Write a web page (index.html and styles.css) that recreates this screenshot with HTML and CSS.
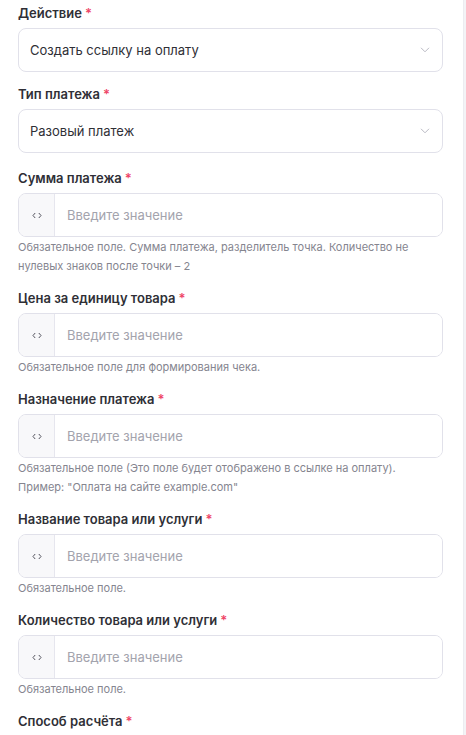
FILE: index.html
```html
<!DOCTYPE html>
<html lang="ru">
<head>
  <meta charset="UTF-8" />
  <meta name="viewport" content="width=device-width, initial-scale=1" />
  <title>Создать ссылку на оплату</title>
  <link rel="stylesheet" href="styles.css">
</head>
<body>

  <div class="panel">
    <form class="form">

      <!-- выбор действия -->
      <div class="field field-select">
        <label class="label">Действие<span class="req">*</span></label>
        <div class="select">
          <span class="select-value">Создать ссылку на оплату</span>
          <svg class="chevron" width="10" height="6" viewBox="0 0 10 6"><path d="M1 0.8l4 4 4-4" fill="none" stroke="#b9b9c3" stroke-width="1"/></svg>
        </div>
      </div>

      <div class="field field-select">
        <label class="label">Тип платежа<span class="req">*</span></label>
        <div class="select">
          <span class="select-value">Разовый платеж</span>
          <svg class="chevron" width="10" height="6" viewBox="0 0 10 6"><path d="M1 0.8l4 4 4-4" fill="none" stroke="#b9b9c3" stroke-width="1"/></svg>
        </div>
      </div>

      <!-- поля с переменными -->
      <div class="field">
        <label class="label">Сумма платежа<span class="req">*</span></label>
        <div class="input-group">
          <span class="prefix"><svg width="10" height="7" viewBox="0 0 10 7"><path d="M3.2 1L1 3.5 3.2 6M6.8 1L9 3.5 6.8 6" fill="none" stroke="#55555f" stroke-width="1"/></svg></span>
          <input type="text" placeholder="Введите значение" />
        </div>
        <p class="help">Обязательное поле. Сумма платежа, разделитель точка. Количество не нулевых знаков после точки – 2</p>
      </div>

      <div class="field">
        <label class="label">Цена за единицу товара<span class="req">*</span></label>
        <div class="input-group">
          <span class="prefix"><svg width="10" height="7" viewBox="0 0 10 7"><path d="M3.2 1L1 3.5 3.2 6M6.8 1L9 3.5 6.8 6" fill="none" stroke="#55555f" stroke-width="1"/></svg></span>
          <input type="text" placeholder="Введите значение" />
        </div>
        <p class="help">Обязательное поле для формирования чека.</p>
      </div>

      <div class="field">
        <label class="label">Назначение платежа<span class="req">*</span></label>
        <div class="input-group">
          <span class="prefix"><svg width="10" height="7" viewBox="0 0 10 7"><path d="M3.2 1L1 3.5 3.2 6M6.8 1L9 3.5 6.8 6" fill="none" stroke="#55555f" stroke-width="1"/></svg></span>
          <input type="text" placeholder="Введите значение" />
        </div>
        <p class="help">Обязательное поле (Это поле будет отображено в ссылке на оплату). Пример: "Оплата на сайте example.com"</p>
      </div>

      <div class="field">
        <label class="label">Название товара или услуги<span class="req">*</span></label>
        <div class="input-group">
          <span class="prefix"><svg width="10" height="7" viewBox="0 0 10 7"><path d="M3.2 1L1 3.5 3.2 6M6.8 1L9 3.5 6.8 6" fill="none" stroke="#55555f" stroke-width="1"/></svg></span>
          <input type="text" placeholder="Введите значение" />
        </div>
        <p class="help">Обязательное поле.</p>
      </div>

      <div class="field">
        <label class="label">Количество товара или услуги<span class="req">*</span></label>
        <div class="input-group">
          <span class="prefix"><svg width="10" height="7" viewBox="0 0 10 7"><path d="M3.2 1L1 3.5 3.2 6M6.8 1L9 3.5 6.8 6" fill="none" stroke="#55555f" stroke-width="1"/></svg></span>
          <input type="text" placeholder="Введите значение" />
        </div>
        <p class="help">Обязательное поле.</p>
      </div>

      <div class="field">
        <label class="label">Способ расчёта<span class="req">*</span></label>
      </div>

    </form>
    <div class="scroll-track"></div>
  </div>

</body>
</html>
```

FILE: styles.css
```css
* {
  box-sizing: border-box;
}
body {
  margin: 0;
  font-family: Inter, "Noto Sans", sans-serif;
  background: #fff;
  color: #2f2f36;
}

.panel {
  display: flex;
  height: 735px;
  overflow: hidden;
}

.form {
  flex: 1;
  padding: 4px 20px 0 18px;
  display: flex;
  flex-direction: column;
}

.scroll-track {
  width: 3px;
  background: #f3f3f6;
  border-left: 1px solid #ececf0;
}

.field {
  margin-bottom: 13px;
}
/* после селектов отступ чуть больше */
.field-select + .field:not(.field-select) {
  margin-top: 3px;
}

.label {
  display: block;
  font-size: 13px;
  font-weight: 600;
  line-height: 18px;
  margin-bottom: 6px;
  color: #2f2f36;
}
.req {
  color: #ee4466;
  margin-left: 3px;
}

.select {
  height: 44px;
  border: 1px solid #e1e1ea;
  border-radius: 8px;
  display: flex;
  align-items: center;
  justify-content: space-between;
  padding: 0 12px 0 11px;
}
.select-value {
  font-size: 13px;
  color: #2f2f36;
}

.input-group {
  height: 44px;
  border: 1px solid #e1e1ea;
  border-radius: 8px;
  display: flex;
  overflow: hidden;
}
.prefix {
  width: 36px;
  background: #f8f8fa;
  border-right: 1px solid #e6e6ee;
  display: flex;
  align-items: center;
  justify-content: center;
}
.input-group input {
  flex: 1;
  border: none;
  outline: none;
  padding: 0 12px;
  font-family: inherit;
  font-size: 13px;
  color: #2f2f36;
  background: #fff;
}
.input-group input::placeholder {
  color: #a3a3ad;
}

.help {
  margin: 1px 0 0;
  font-size: 11px;
  line-height: 19px;
  color: #85858f;
}
```
